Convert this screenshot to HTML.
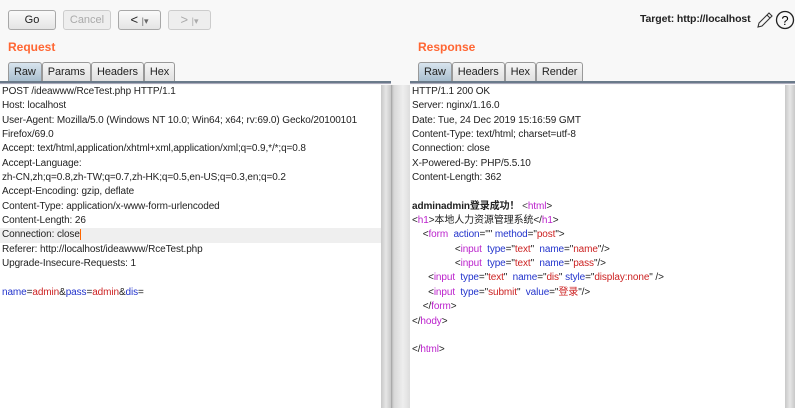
<!DOCTYPE html>
<html><head><style>
body{margin:0;width:795px;height:408px;background:#f8f8f8;font-family:"Liberation Sans","Noto Sans CJK SC",sans-serif;font-size:11px;color:#222;position:relative;overflow:hidden}
.btn{position:absolute;top:10px;height:20px;border:1px solid #a8a8a8;border-radius:3px;background:linear-gradient(#fafafa,#e4e4e4);font-size:11px;text-align:center;line-height:19px;box-sizing:border-box}
.dis{color:#aaa;border-color:#ccc;background:#eee}
.h{position:absolute;top:40px;color:#ff6633;font-weight:bold;font-size:12px}
.tabs{position:absolute;top:62px;height:19px}
.tab{float:left;height:18px;border:1px solid #999;border-bottom:none;border-radius:3px 3px 0 0;background:linear-gradient(#f6f6f6,#e0e0e0);padding:0 5px;line-height:19px;font-size:11px;letter-spacing:-0.1px}
.tab.a{background:linear-gradient(#d8e4ee,#a9bfcf)}
.line{position:absolute;top:81px;height:2px;background:#6a7a8a;border-bottom:1px solid #aab}
.ed{position:absolute;top:85px;bottom:0;background:#fff;overflow:hidden}
.ed div{height:14.35px;line-height:14.35px;white-space:pre;padding-left:2px;font-size:10px;letter-spacing:-0.1px}
.sb{position:absolute;top:85px;bottom:0;width:10px;background:linear-gradient(90deg,#c8c8c8,#e6e6e6,#c8c8c8)}
.b{color:#2233cc}.r{color:#cc2222}.m{color:#bb22cc}.g{color:#444}
</style></head><body>
<div class="btn" style="left:8px;width:48px">Go</div>
<div class="btn dis" style="left:63px;width:48px">Cancel</div>
<div class="btn" style="left:118px;width:43px;font-size:13px;line-height:17px">&lt; <span style="font-size:9px;color:#666">|▾</span></div>
<div class="btn dis" style="left:168px;width:43px;font-size:13px;line-height:17px">&gt; <span style="font-size:9px">|▾</span></div>
<div style="position:absolute;left:640px;top:13px;font-weight:bold;font-size:10.5px;letter-spacing:-0.1px">Target: http://localhost</div>
<svg style="position:absolute;left:755px;top:10px" width="40" height="22"><path d="M3 17 L4 13 L14 3 L17 6 L7 16 Z M12 5 L15 8" fill="none" stroke="#333" stroke-width="1.1"/><circle cx="30" cy="10" r="8.5" fill="none" stroke="#222" stroke-width="1.3"/><text x="30" y="15" text-anchor="middle" font-size="13" font-family="Liberation Sans">?</text></svg>
<div class="h" style="left:8px">Request</div>
<div class="h" style="left:418px">Response</div>
<div class="tabs" style="left:8px"><div class="tab a">Raw</div><div class="tab">Params</div><div class="tab">Headers</div><div class="tab">Hex</div></div>
<div class="tabs" style="left:418px"><div class="tab a">Raw</div><div class="tab">Headers</div><div class="tab">Hex</div><div class="tab">Render</div></div>
<div class="line" style="left:0;width:391px"></div>
<div class="line" style="left:410px;width:385px"></div>
<div style="position:absolute;left:391px;top:85px;bottom:0;width:19px;background:linear-gradient(90deg,#999 0,#bbb 1px,#d8d8d8 3px,#eee 12px,#ddd 19px)"></div>
<div class="ed" style="left:0;width:381px">
<div>POST /ideawww/RceTest.php HTTP/1.1</div><div>Host: localhost</div><div>User-Agent: Mozilla/5.0 (Windows NT 10.0; Win64; x64; rv:69.0) Gecko/20100101</div><div>Firefox/69.0</div><div>Accept: text/html,application/xhtml+xml,application/xml;q=0.9,*/*;q=0.8</div><div>Accept-Language:</div><div>zh-CN,zh;q=0.8,zh-TW;q=0.7,zh-HK;q=0.5,en-US;q=0.3,en;q=0.2</div><div>Accept-Encoding: gzip, deflate</div><div>Content-Type: application/x-www-form-urlencoded</div><div>Content-Length: 26</div><div style="background:#efefef">Connection: close<span style="border-left:1px solid #f60"></span></div><div>Referer: http://localhost/ideawww/RceTest.php</div><div>Upgrade-Insecure-Requests: 1</div><div></div><div><span class="b">name</span>=<span class="r">admin</span>&amp;<span class="b">pass</span>=<span class="r">admin</span>&amp;<span class="b">dis</span>=</div>
</div>
<div class="sb" style="left:381px"></div>
<div class="ed" style="left:410px;width:375px">
<div>HTTP/1.1 200 OK</div><div>Server: nginx/1.16.0</div><div>Date: Tue, 24 Dec 2019 15:16:59 GMT</div><div>Content-Type: text/html; charset=utf-8</div><div>Connection: close</div><div>X-Powered-By: PHP/5.5.10</div><div>Content-Length: 362</div><div></div><div><b>adminadmin登录成功！</b> <span class="g">&lt;</span><span class="m">html</span>&gt;</div><div>&lt;<span class="m">h1</span>&gt;本地人力资源管理系统&lt;/<span class="m">h1</span>&gt;</div><div>    &lt;<span class="m">form</span>  <span class="b">action</span>="" <span class="b">method</span>="<span class="r">post</span>"&gt;</div><div>                &lt;<span class="m">input</span>  <span class="b">type</span>="<span class="r">text</span>"  <span class="b">name</span>="<span class="r">name</span>"/&gt;</div><div>                &lt;<span class="m">input</span>  <span class="b">type</span>="<span class="r">text</span>"  <span class="b">name</span>="<span class="r">pass</span>"/&gt;</div><div>      &lt;<span class="m">input</span>  <span class="b">type</span>="<span class="r">text</span>"  <span class="b">name</span>="<span class="r">dis</span>" <span class="b">style</span>="<span class="r">display:none</span>" /&gt;</div><div>      &lt;<span class="m">input</span>  <span class="b">type</span>="<span class="r">submit</span>"  <span class="b">value</span>="<span class="r">登录</span>"/&gt;</div><div>    &lt;/<span class="m">form</span>&gt;</div><div>&lt;/<span class="m">hody</span>&gt;</div><div></div><div>&lt;/<span class="m">html</span>&gt;</div>
</div>
<div class="sb" style="left:785px"></div>
</body></html>
